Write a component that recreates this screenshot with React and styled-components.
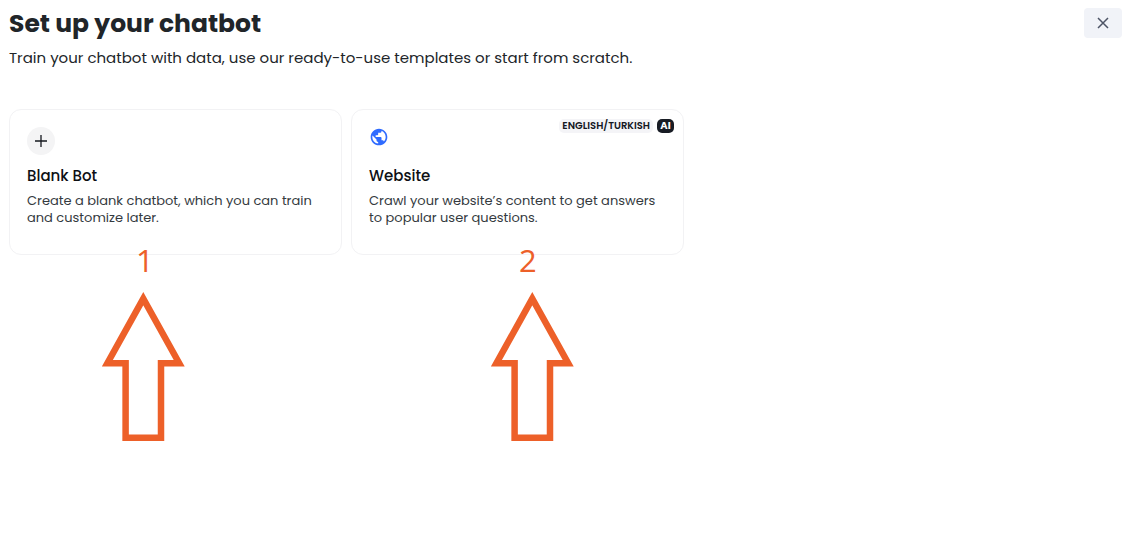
import React from "react";
import styled, { createGlobalStyle } from "styled-components";
import { MdPublic } from "react-icons/md";

const GlobalStyle = createGlobalStyle`
  *, *::before, *::after { box-sizing: border-box; }
  body {
    margin: 0;
    background: #fff;
    color: #212529;
    font-family: Poppins, Inter, "Liberation Sans", sans-serif;
  }
  h1, h2, p { margin: 0; }
`;

const Page = styled.main`
  min-height: 100vh;
  padding: 8px 8px 8px 9px;
`;

const Header = styled.header`
  display: flex;
  justify-content: space-between;
  align-items: flex-start;
`;

const Title = styled.h1`
  font-size: 25px;
  line-height: 32px;
  font-weight: 700;
`;

const Subtitle = styled.p`
  margin-top: 8px;
  font-size: 15px;
  line-height: 20px;
  font-weight: 400;
`;

const CloseButton = styled.button`
  display: flex;
  align-items: center;
  justify-content: center;
  width: 38px;
  height: 30px;
  padding: 0;
  border: 0;
  border-radius: 4px;
  background: #f1f3f8;
  color: #4d5466;
  cursor: pointer;
`;

const Cards = styled.section`
  display: grid;
  grid-template-columns: 1fr 1fr;
  gap: 9px;
  max-width: 675px;
  margin-top: 41px;
`;

const Step = styled.div`
  display: flex;
  flex-direction: column;
`;

const Card = styled.a`
  position: relative;
  display: block;
  min-height: 146px;
  padding: 17px;
  border: 1px solid #f2f2f4;
  border-radius: 12px;
  color: inherit;
  text-decoration: none;
`;

const IconBox = styled.span`
  display: flex;
  align-items: center;
  justify-content: center;
  width: fit-content;
  height: 28px;
`;

const PlusIcon = styled(IconBox)`
  width: 28px;
  border-radius: 50%;
  background: #f4f4f5;
`;

const GlobeIcon = styled(IconBox)`
  align-items: flex-start;
  color: #2f6bff;
`;

const CardTitle = styled.h2`
  margin-top: 11px;
  font-size: 15px;
  line-height: 20px;
  font-weight: 500;
  color: #0d0f14;
`;

const CardText = styled.p`
  margin-top: 6px;
  font-size: 13px;
  line-height: 17px;
  font-weight: 400;
  color: #343a40;
`;

const Badges = styled.span`
  position: absolute;
  top: 9px;
  right: 9px;
  display: flex;
  gap: 4px;
`;

const Badge = styled.span`
  min-width: 17px;
  padding: 0 3px;
  border-radius: 5px;
  background: ${(p) => (p.$dark ? "#181c24" : "#f4f4f7")};
  color: ${(p) => (p.$dark ? "#fff" : "#14181f")};
  font-size: 10px;
  line-height: 14px;
  font-weight: ${(p) => (p.$dark ? 700 : 600)};
  text-align: center;
`;

const Annotation = styled.div`
  display: flex;
  flex-direction: column;
  align-items: flex-start;
  margin-top: -16px;
  padding-left: ${(p) => p.$indent}px;
  z-index: 1;
  pointer-events: none;
`;

const StepNumber = styled.span`
  padding-left: ${(p) => p.$indent}px;
  color: #ed6029;
  font-family: "Open Sans", "Noto Sans", sans-serif;
  font-size: 31px;
  line-height: 42px;
  font-weight: 400;
`;

const Arrow = styled.svg`
  display: block;
  width: 83px;
  height: 150px;
  margin-top: 10px;
`;

function StepAnnotation({ number, indent, numberIndent }) {
  return (
    <Annotation $indent={indent}>
      <StepNumber $indent={numberIndent}>{number}</StepNumber>
      <Arrow viewBox="0 0 83 150" aria-hidden="true">
        <path
          d="M41.3 7.7 5.4 72.2H23.6V146.7H59V72.2H77.2Z"
          fill="none"
          stroke="#ed6029"
          strokeWidth="6.5"
          strokeMiterlimit="10"
        />
      </Arrow>
    </Annotation>
  );
}

export default function App() {
  return (
    <>
      <GlobalStyle />
      <Page>
        <Header>
          <div>
            <Title>Set up your chatbot</Title>
            <Subtitle>
              Train your chatbot with data, use our ready-to-use templates or start from scratch.
            </Subtitle>
          </div>
          <CloseButton type="button" aria-label="Close">
            <svg width="12" height="12" viewBox="0 0 12 12" aria-hidden="true">
              <path d="M1 1 11 11M11 1 1 11" stroke="currentColor" strokeWidth="1.5" />
            </svg>
          </CloseButton>
        </Header>
        <Cards>
          <Step>
            <Card href="#blank">
              <PlusIcon>
                <svg width="12" height="12" viewBox="0 0 12 12" aria-hidden="true">
                  <path d="M6 0V12M0 6H12" stroke="#15181e" strokeWidth="1.3" />
                </svg>
              </PlusIcon>
              <CardTitle>Blank Bot</CardTitle>
              <CardText>Create a blank chatbot, which you can train and customize later.</CardText>
            </Card>
            <StepAnnotation number={1} indent={93} numberIndent={34} />
          </Step>
          <Step>
            <Card href="#website">
              <GlobeIcon>
                <MdPublic size={20} />
              </GlobeIcon>
              <CardTitle>Website</CardTitle>
              <CardText>Crawl your website’s content to get answers to popular user questions.</CardText>
              <Badges>
                <Badge>ENGLISH/TURKISH</Badge>
                <Badge $dark>AI</Badge>
              </Badges>
            </Card>
            <StepAnnotation number={2} indent={140} numberIndent={28} />
          </Step>
        </Cards>
      </Page>
    </>
  );
}
